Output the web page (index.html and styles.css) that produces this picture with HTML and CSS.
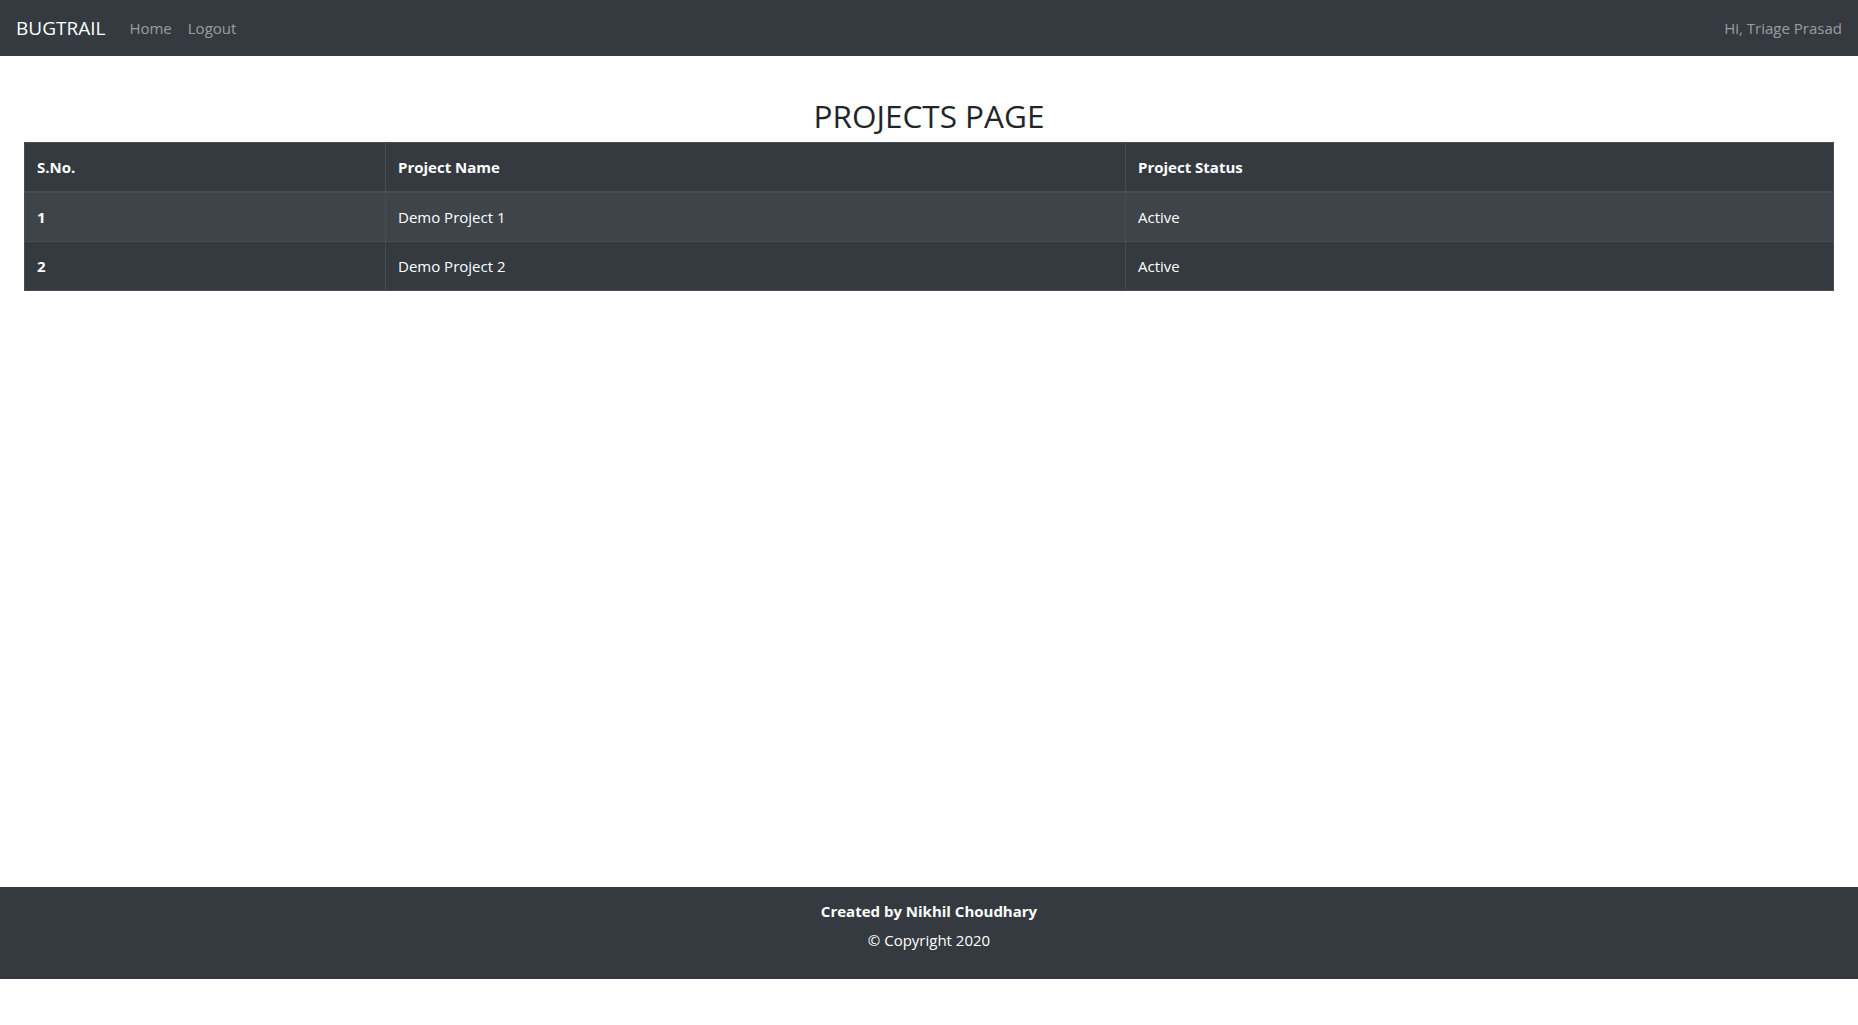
FILE: index.html
```html
<!DOCTYPE html>
<html lang="en">
<head>
<meta charset="utf-8">
<title>BugTrail - Projects</title>
<link rel="stylesheet" href="styles.css">
</head>
<body>
<div class="page">
  <nav class="navbar">
    <a class="brand" href="#">BUGTRAIL</a>
    <ul class="nav">
      <li><a class="nav-link" href="#">Home</a></li>
      <li><a class="nav-link" href="#">Logout</a></li>
    </ul>
    <span class="navbar-text">Hi, Triage Prasad</span>
  </nav>
  <main class="main">
    <h2 class="title">PROJECTS PAGE</h2>
    <table class="table">
      <thead>
        <tr><th>S.No.</th><th>Project Name</th><th>Project Status</th></tr>
      </thead>
      <tbody>
        <tr class="odd"><th>1</th><td>Demo Project 1</td><td>Active</td></tr>
        <tr><th>2</th><td>Demo Project 2</td><td>Active</td></tr>
      </tbody>
    </table>
  </main>
  <footer class="footer">
    <p class="footer-line strong">Created by Nikhil Choudhary</p>
    <p class="footer-line">&copy; Copyright 2020</p>
  </footer>
</div>
</body>
</html>
```
FILE: styles.css
```css
* { box-sizing: border-box; }
html, body { margin: 0; padding: 0; }
body {
  font-family: "Open Sans", "Noto Sans", "Liberation Sans", sans-serif;
  font-size: 15px;
  line-height: 24px;
  color: #212529;
  background: #fff;
}
.page {
  height: 979px;
  display: flex;
  flex-direction: column;
}
.navbar {
  background: #343a40;
  display: flex;
  align-items: center;
  padding: 8px 16px;
  height: 56px;
}
.brand {
  color: #fff;
  font-size: 19px;
  line-height: 30px;
  padding: 5px 0;
  margin-right: 16px;
  text-decoration: none;
}
.nav {
  list-style: none;
  margin: 0;
  padding: 0;
  display: flex;
  flex: 1;
}
.nav-link {
  display: block;
  padding: 8px;
  color: rgba(255,255,255,.5);
  text-decoration: none;
}
.navbar-text {
  color: rgba(255,255,255,.5);
  padding: 8px 0;
}
.main {
  flex: 1;
  padding: 0 24px;
}
.title {
  text-align: center;
  font-size: 31.5px;
  font-weight: 500;
  line-height: 38px;
  margin: 41px 0 7px;
}
.table {
  width: 100%;
  border-collapse: collapse;
  background: #343a40;
  color: #fff;
}
.table th, .table td {
  padding: 12px;
  text-align: left;
  vertical-align: top;
  border: 1px solid #454d55;
}
.table th { font-weight: 700; }
.table td { font-weight: 400; }
.table thead th { border-bottom-width: 2px; }
.table .odd { background: #3e444a; }
.table th:nth-child(1) { width: 361px; }
.table th:nth-child(2) { width: 740px; }
.footer {
  background: #343a40;
  color: #fff;
  text-align: center;
  padding: 12px 0 27px;
}
.footer-line { margin: 0; }
.footer-line.strong { font-weight: 700; margin-bottom: 5px; }
```
